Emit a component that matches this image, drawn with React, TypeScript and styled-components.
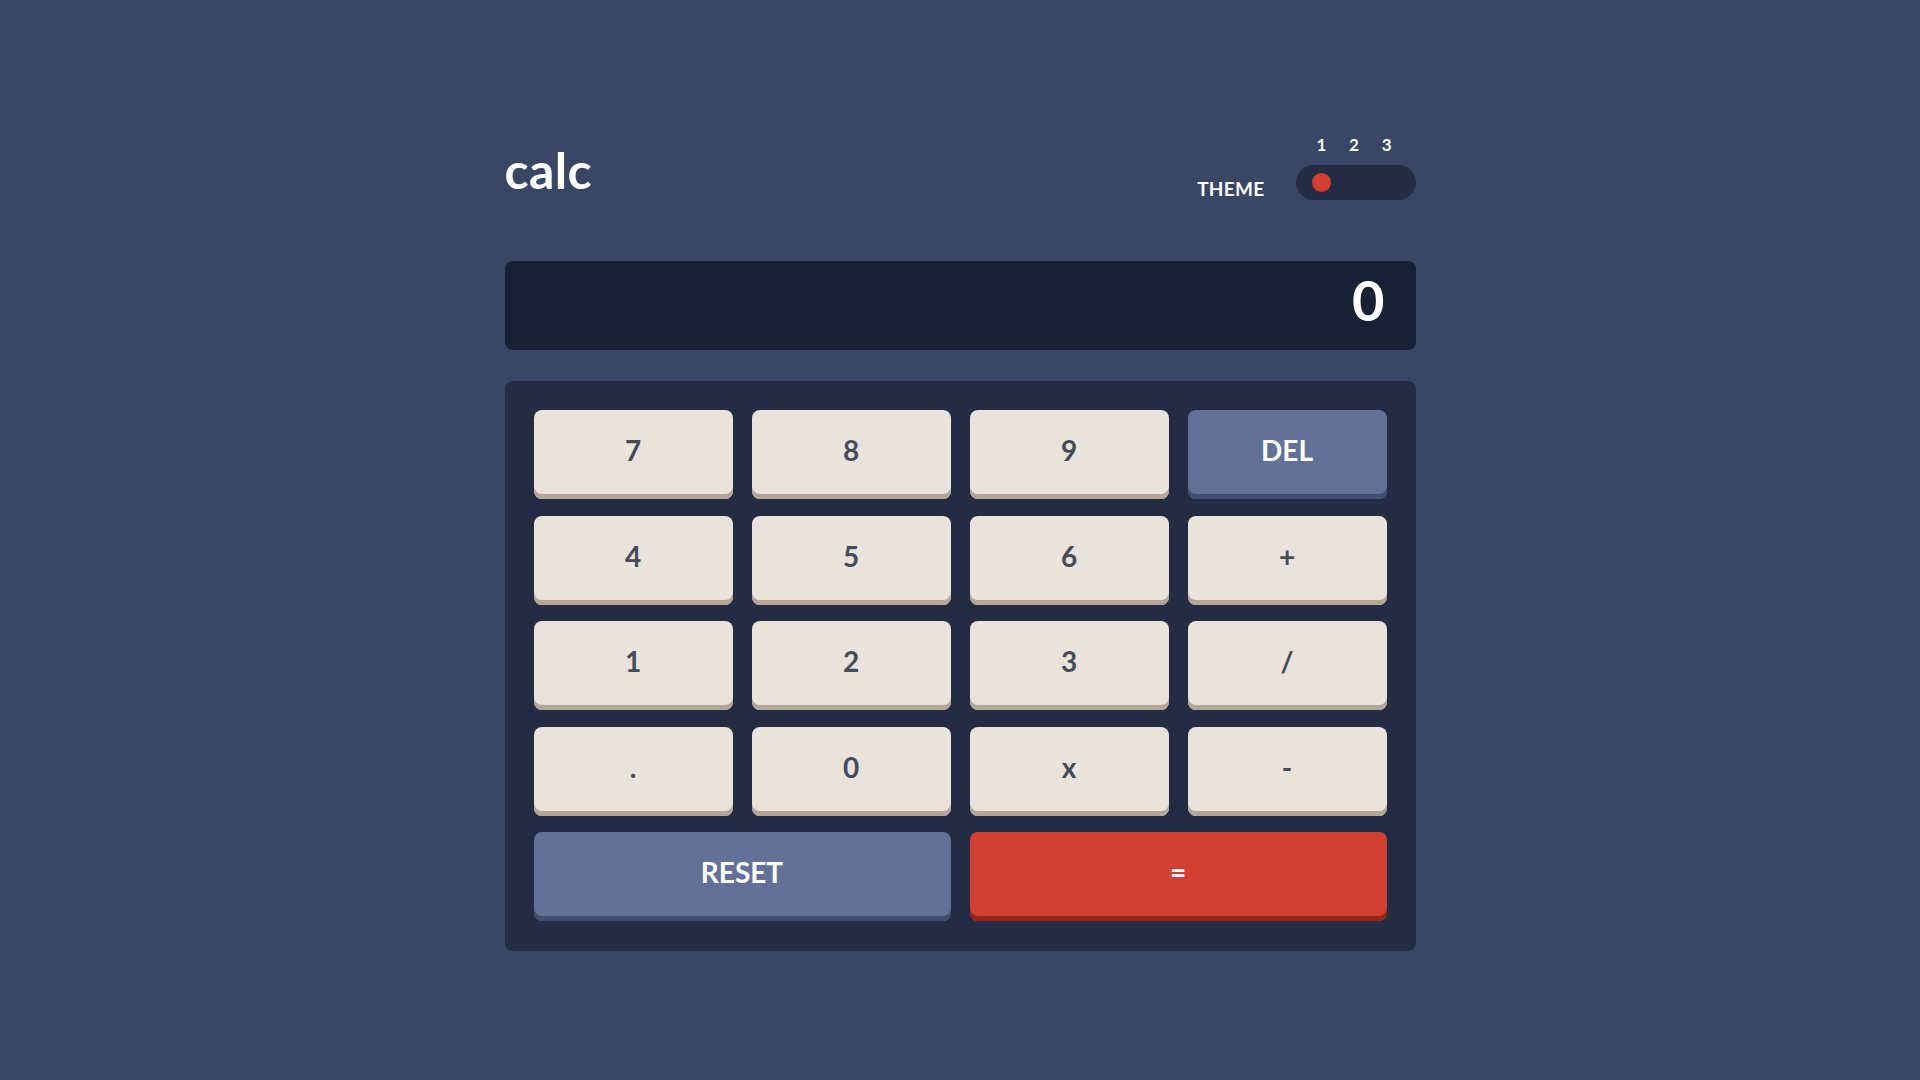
import React, { useState } from 'react';
import styled, { createGlobalStyle } from 'styled-components';

const GlobalStyle = createGlobalStyle`
    html, body {
        margin: 0;
        padding: 0;
        background: #3a4764;
    }

    body {
        font-family: "Lato", "Open Sans", sans-serif;
        min-height: 1080px;
    }
`;

const Page = styled.div`
    width: 911px;
    margin: 0 auto;
    padding-top: 120px;
`;

const Header = styled.header`
    display: flex;
    justify-content: space-between;
    align-items: flex-end;
    height: 80px;
    margin-bottom: 61px;
`;

const Logo = styled.h1`
    margin: 0 0 5px 0;
    font-size: 50px;
    line-height: 1;
    font-weight: 700;
    color: #ffffff;
    letter-spacing: 0.4px;
`;

const ThemeGroup = styled.div`
    display: flex;
    align-items: flex-end;
    gap: 31px;
`;

const ThemeLabel = styled.span`
    font-size: 19px;
    font-weight: 700;
    color: #ffffff;
    letter-spacing: 0.3px;
    line-height: 1;
    margin-bottom: 2px;
`;

const SwitchColumn = styled.div`
    display: flex;
    flex-direction: column;
    gap: 12px;
`;

const Numbers = styled.div`
    display: flex;
    justify-content: space-between;
    padding: 0 24px 0 21px;
    font-size: 17px;
    font-weight: 700;
    color: #ffffff;
    line-height: 1;
`;

const Track = styled.div`
    position: relative;
    width: 120px;
    height: 35px;
    border-radius: 18px;
    background: #232c43;
`;

const Knob = styled.span<{ $pos: number }>`
    position: absolute;
    top: 8px;
    left: ${(p) => 16 + p.$pos * 33}px;
    width: 19px;
    height: 19px;
    border-radius: 50%;
    background: #d03f2f;
`;

const Screen = styled.div`
    display: flex;
    align-items: center;
    justify-content: flex-end;
    height: 89px;
    padding: 0 31px 12px;
    box-sizing: border-box;
    border-radius: 8px;
    background: #182034;
    color: #ffffff;
    font-size: 56px;
    font-weight: 700;
    margin-bottom: 31px;
`;

const Keypad = styled.div`
    display: grid;
    grid-template-columns: repeat(4, 1fr);
    column-gap: 19px;
    row-gap: 16.5px;
    padding: 29px 29px 30px;
    border-radius: 8px;
    background: #232c43;
`;

const kinds = {
    num: { bg: '#eae3dc', shade: '#b4a597', color: '#444b5a' },
    fn: { bg: '#637097', shade: '#404e72', color: '#ffffff' },
    eq: { bg: '#d03f2f', shade: '#93261a', color: '#ffffff' },
};

const Key = styled.button<{ $kind: keyof typeof kinds; $wide?: boolean }>`
    grid-column: span ${(p) => (p.$wide ? 2 : 1)};
    display: flex;
    align-items: center;
    justify-content: center;
    height: 89px;
    padding: 0 0 9px;
    border: none;
    border-radius: 8px;
    background: ${(p) => kinds[p.$kind].bg};
    box-shadow: inset 0 -5px 0 ${(p) => kinds[p.$kind].shade};
    color: ${(p) => kinds[p.$kind].color};
    font-family: "Lato", "Open Sans", sans-serif;
    font-size: 28px;
    font-weight: 700;
    cursor: pointer;
`;

const keys: Array<[string, keyof typeof kinds]> = [
    ['7', 'num'], ['8', 'num'], ['9', 'num'], ['DEL', 'fn'],
    ['4', 'num'], ['5', 'num'], ['6', 'num'], ['+', 'num'],
    ['1', 'num'], ['2', 'num'], ['3', 'num'], ['/', 'num'],
    ['.', 'num'], ['0', 'num'], ['x', 'num'], ['-', 'num'],
];

const App = () => {
    const [theme] = useState(0);

    return (
        <>
            <GlobalStyle />
            <Page>
                <Header>
                    <Logo>calc</Logo>
                    <ThemeGroup>
                        <ThemeLabel>THEME</ThemeLabel>
                        <SwitchColumn>
                            <Numbers>
                                <span>1</span>
                                <span>2</span>
                                <span>3</span>
                            </Numbers>
                            <Track>
                                <Knob $pos={theme} />
                            </Track>
                        </SwitchColumn>
                    </ThemeGroup>
                </Header>

                <Screen>0</Screen>

                <Keypad>
                    {keys.map(([label, kind]) => (
                        <Key key={label} $kind={kind}>{label}</Key>
                    ))}
                    <Key $kind="fn" $wide>RESET</Key>
                    <Key $kind="eq" $wide>=</Key>
                </Keypad>
            </Page>
        </>
    );
};

export default App;
